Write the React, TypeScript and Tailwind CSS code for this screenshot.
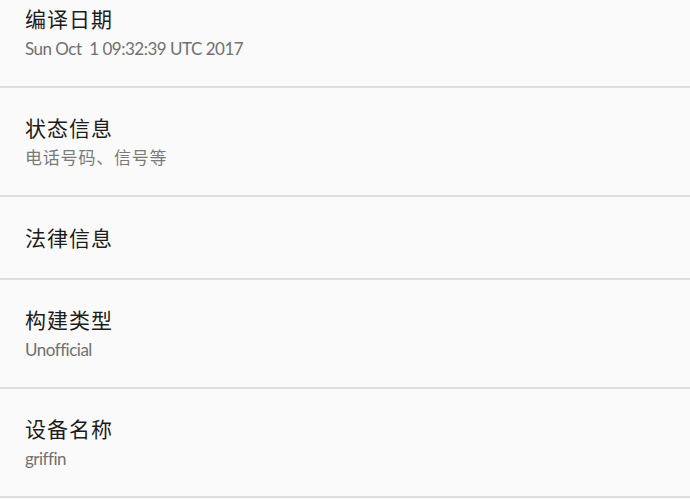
const items: { title: string; summary?: string; cjk?: boolean }[] = [
  { title: '编译日期', summary: 'Sun Oct  1 09:32:39 UTC 2017' },
  { title: '状态信息', summary: '电话号码、信号等', cjk: true },
  { title: '法律信息' },
  { title: '构建类型', summary: 'Unofficial' },
  { title: '设备名称', summary: 'griffin' },
]

export default function App() {
  return (
    <div
      className="h-[500px] w-[690px] overflow-hidden bg-[#fafafa]"
      style={{ fontFamily: '"Lato", "Noto Sans CJK SC", sans-serif' }}
    >
      <div className="-mt-[21px]">
        {items.map((item) => (
          <div
            key={item.title}
            className={`flex flex-col justify-center border-b-2 border-[#dedede] px-[25px] ${
              item.summary ? 'h-[109px]' : 'h-[83px]'
            }`}
          >
            <div className="text-[21px] leading-[32px] tracking-[1px] text-[#1c1c1c]">
              {item.title}
            </div>
            {item.summary &&
              (item.cjk ? (
                <div className="text-[17px] leading-[28px] tracking-[0.8px] text-[#7a7a7a]">
                  {item.summary}
                </div>
              ) : (
                <div className="whitespace-pre text-[17px] leading-[28px] tracking-[-0.5px] text-[#707070]">
                  {item.summary}
                </div>
              ))}
          </div>
        ))}
      </div>
    </div>
  )
}
